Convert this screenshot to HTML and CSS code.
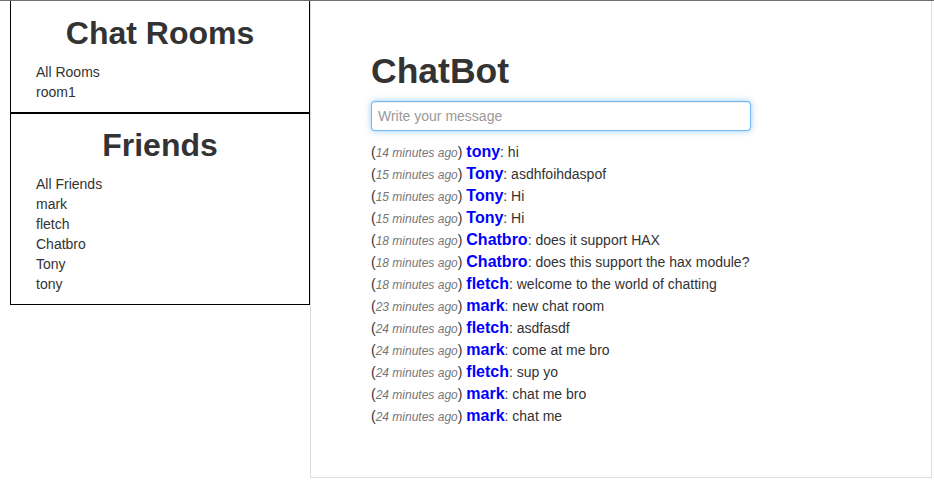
FILE: index.html
```html
<!DOCTYPE html>
<html>
<head>
<meta charset="utf-8">
<title>ChatBot</title>
<link rel="stylesheet" href="styles.css">
</head>
<body>
<div class="page">
  <aside class="sidebar">
    <section class="box box-first">
      <h2 class="box-title">Chat Rooms</h2>
      <ul class="box-list">
        <li>All Rooms</li>
        <li>room1</li>
      </ul>
    </section>
    <section class="box">
      <h2 class="box-title">Friends</h2>
      <ul class="box-list">
        <li>All Friends</li>
        <li>mark</li>
        <li>fletch</li>
        <li>Chatbro</li>
        <li>Tony</li>
        <li>tony</li>
      </ul>
    </section>
  </aside>
  <main class="main">
    <h1 class="title">ChatBot</h1>
    <input class="msg-input" type="text" placeholder="Write your message">
    <div class="messages">
      <div class="msg">(<small class="time">14 minutes ago</small>) <b class="name">tony</b>: hi</div>
      <div class="msg">(<small class="time">15 minutes ago</small>) <b class="name">Tony</b>: asdhfoihdaspof</div>
      <div class="msg">(<small class="time">15 minutes ago</small>) <b class="name">Tony</b>: Hi</div>
      <div class="msg">(<small class="time">15 minutes ago</small>) <b class="name">Tony</b>: Hi</div>
      <div class="msg">(<small class="time">18 minutes ago</small>) <b class="name">Chatbro</b>: does it support HAX</div>
      <div class="msg">(<small class="time">18 minutes ago</small>) <b class="name">Chatbro</b>: does this support the hax module?</div>
      <div class="msg">(<small class="time">18 minutes ago</small>) <b class="name">fletch</b>: welcome to the world of chatting</div>
      <div class="msg">(<small class="time">23 minutes ago</small>) <b class="name">mark</b>: new chat room</div>
      <div class="msg">(<small class="time">24 minutes ago</small>) <b class="name">fletch</b>: asdfasdf</div>
      <div class="msg">(<small class="time">24 minutes ago</small>) <b class="name">mark</b>: come at me bro</div>
      <div class="msg">(<small class="time">24 minutes ago</small>) <b class="name">fletch</b>: sup yo</div>
      <div class="msg">(<small class="time">24 minutes ago</small>) <b class="name">mark</b>: chat me bro</div>
      <div class="msg">(<small class="time">24 minutes ago</small>) <b class="name">mark</b>: chat me</div>
    </div>
  </main>
</div>
</body>
</html>
```
FILE: styles.css
```css
* { box-sizing: border-box; }
html, body { margin: 0; padding: 0; }
body {
  font-family: "Liberation Sans", Arial, Helvetica, sans-serif;
  font-size: 14px;
  line-height: 20px;
  color: #333;
  background: #fff;
  border-top: 1px solid #6e6e6e;
}
.page {
  display: flex;
  align-items: flex-start;
}
.sidebar {
  width: 300px;
  margin-left: 10px;
  display: flex;
  flex-direction: column;
}
.box {
  border: 1px solid #000;
}
.box-first {
  border-top: none;
  padding-top: 1px;
}
.box-title {
  margin: 11px 0 9px;
  font-size: 32px;
  line-height: 40px;
  font-weight: bold;
  text-align: center;
  color: #333;
}
.box-list {
  list-style: none;
  margin: 0 0 10px;
  padding: 0 0 0 25px;
}
.main {
  width: 622px;
  height: 477px;
  border: 1px solid #ddd;
  border-top: none;
  padding: 50px 60px 0;
}
.title {
  margin: 0 0 10px;
  font-size: 35.5px;
  line-height: 40px;
  font-weight: bold;
  color: #333;
}
.msg-input {
  display: block;
  width: 380px;
  height: 30px;
  margin: 0 0 10px;
  padding: 4px 6px;
  font-family: inherit;
  font-size: 14px;
  color: #555;
  border: 1px solid rgba(82, 168, 236, 0.8);
  border-radius: 4px;
  outline: none;
  box-shadow: inset 0 1px 1px rgba(0, 0, 0, 0.075), 0 0 6px rgba(82, 168, 236, 0.6);
}
.msg-input::placeholder { color: #999; }
.messages {
  display: flex;
  flex-direction: column;
}
.msg {
  height: 22px;
  line-height: 22px;
  white-space: nowrap;
}
.time {
  font-size: 12px;
  font-style: italic;
  color: #777;
}
.name {
  font-size: 16px;
  font-weight: bold;
  color: #0000ff;
}
```
